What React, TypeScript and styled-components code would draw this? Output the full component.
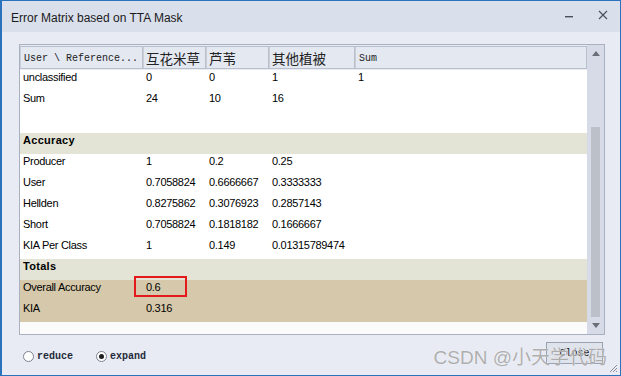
import React from "react";
import styled, { createGlobalStyle } from "styled-components";

const GlobalStyle = createGlobalStyle`
  html, body { margin: 0; padding: 0; background: #ffffff; }
  * { box-sizing: border-box; }
`;

const Window = styled.div`
  position: relative;
  width: 621px;
  height: 376px;
  border: 1px solid #2a72bb;
  border-left-width: 2px;
  background: #e8ebf3;
  display: flex;
  flex-direction: column;
  font-family: "Liberation Sans", Arial, sans-serif;
  overflow: hidden;
`;

const TitleBar = styled.div`
  height: 31px;
  flex: none;
  display: flex;
  align-items: center;
  padding: 3px 0 0 9px;
  background: #d9dfeb;
`;

const Title = styled.div`
  flex: 1;
  font-size: 12px;
  color: #1b1b1b;
`;

const TitleButton = styled.div`
  width: 34px;
  height: 28px;
  display: flex;
  align-items: center;
  justify-content: center;
  margin-top: -6px;
  color: #4a4f5a;
`;

const Frame = styled.div`
  margin: 12px 0 0 17px;
  width: 586px;
  height: 291px;
  border: 1px solid #aab1be;
  display: flex;
  background: #ffffff;
`;

const Grid = styled.div`
  flex: 1;
  display: flex;
  flex-direction: column;
  background: #fbfbfb;
  overflow: hidden;
`;

const cols = "123px 63px 63px 86px 1fr";

const HeaderRow = styled.div`
  height: 25px;
  flex: none;
  display: grid;
  grid-template-columns: ${cols};
  background: #e8ebf3;
  padding-top: 1px;
  padding-bottom: 1px;
`;

const HeaderCell = styled.div<{ $cjk?: boolean }>`
  border: 1px solid #b9bfcb;
  border-left-color: #c9ced8;
  background: #e4e8f1;
  display: flex;
  align-items: center;
  padding-left: ${(p) => (p.$cjk ? "2px" : "3px")};
  padding-top: ${(p) => (p.$cjk ? "0" : "2px")};
  white-space: nowrap;
  overflow: hidden;
  color: #222222;
  font-family: ${(p) =>
    p.$cjk
      ? '"Noto Sans CJK SC", "Liberation Sans", sans-serif'
      : '"Liberation Mono", monospace'};
  font-size: ${(p) => (p.$cjk ? "13.5px" : "10px")};
`;

const Row = styled.div<{ $tone?: "plain" | "section" | "total" }>`
  height: 21px;
  flex: none;
  display: grid;
  grid-template-columns: ${cols};
  background: ${(p) =>
    p.$tone === "section" ? "#e3e4d6" : p.$tone === "total" ? "#d6c8aa" : "#ffffff"};
`;

const Cell = styled.div<{ $bold?: boolean }>`
  padding-left: 3px;
  line-height: 14px;
  font-size: 11px;
  font-weight: ${(p) => (p.$bold ? 700 : 400)};
  letter-spacing: ${(p) => (p.$bold ? "0.3px" : "-0.3px")};
  color: #000000;
  white-space: nowrap;
`;

const Scrollbar = styled.div`
  width: 17px;
  flex: none;
  background: #d6dbe7;
  display: flex;
  flex-direction: column;
  align-items: center;
`;

const Arrow = styled.div<{ $down?: boolean }>`
  height: 17px;
  flex: none;
  display: flex;
  align-items: center;
  justify-content: center;
  &::after {
    content: "";
    border-left: 4px solid transparent;
    border-right: 4px solid transparent;
    ${(p) =>
      p.$down ? "border-top: 5px solid #6b6f78;" : "border-bottom: 5px solid #6b6f78;"}
  }
`;

const Track = styled.div`
  flex: 1;
  width: 100%;
  display: flex;
  flex-direction: column;
  align-items: center;
`;

const Thumb = styled.div`
  width: 9px;
  margin-top: 65px;
  height: 190px;
  background: #bcc0c9;
`;

const Footer = styled.div`
  flex: 1;
  display: flex;
  align-items: flex-start;
  padding: 7px 17px 0 21px;
`;

const RadioGroup = styled.div`
  flex: 1;
  display: flex;
  gap: 23px;
  margin-top: 9px;
`;

const RadioOption = styled.label`
  display: flex;
  align-items: center;
  gap: 3px;
  font-family: "Liberation Mono", monospace;
  font-size: 10px;
  font-weight: 700;
  color: #1e2a3a;
`;

const RadioDot = styled.span<{ $checked?: boolean }>`
  width: 11px;
  height: 11px;
  border-radius: 50%;
  border: 1px solid #7c818c;
  background: #ffffff;
  display: flex;
  align-items: center;
  justify-content: center;
  &::after {
    content: "";
    width: 5px;
    height: 5px;
    border-radius: 50%;
    background: ${(p) => (p.$checked ? "#1f1f1f" : "transparent")};
  }
`;

const CloseButton = styled.div`
  width: 57px;
  height: 22px;
  border: 1px solid #9aa2b1;
  background: #dfe3ec;
  display: flex;
  align-items: center;
  justify-content: center;
  font-family: "Liberation Mono", monospace;
  font-size: 10px;
  color: #111;
`;

const Highlight = styled.div`
  position: absolute;
  left: 132px;
  top: 275px;
  width: 53px;
  height: 21px;
  border: 2px solid #e3191c;
`;

const Watermark = styled.div`
  position: absolute;
  right: 13px;
  bottom: 6px;
  font-family: "Liberation Sans", "Noto Sans CJK SC", sans-serif;
  font-size: 19px;
  color: rgba(160, 160, 160, 0.85);
  text-shadow: 0 0 1px rgba(255, 255, 255, 0.9);
  white-space: nowrap;
  pointer-events: none;
`;

const Grip = styled.svg`
  position: absolute;
  right: 2px;
  bottom: 2px;
`;

type RowData = { cells: string[]; tone?: "plain" | "section" | "total"; bold?: boolean };

const rows: RowData[] = [
  { cells: ["unclassified", "0", "0", "1", "1"] },
  { cells: ["Sum", "24", "10", "16", ""] },
  { cells: ["", "", "", "", ""] },
  { cells: ["Accuracy", "", "", "", ""], tone: "section", bold: true },
  { cells: ["Producer", "1", "0.2", "0.25", ""] },
  { cells: ["User", "0.7058824", "0.6666667", "0.3333333", ""] },
  { cells: ["Hellden", "0.8275862", "0.3076923", "0.2857143", ""] },
  { cells: ["Short", "0.7058824", "0.1818182", "0.1666667", ""] },
  { cells: ["KIA Per Class", "1", "0.149", "0.01315789474", ""] },
  { cells: ["Totals", "", "", "", ""], tone: "section", bold: true },
  { cells: ["Overall Accuracy", "0.6", "", "", ""], tone: "total" },
  { cells: ["KIA", "0.316", "", "", ""], tone: "total" },
];

export default function App() {
  return (
    <>
      <GlobalStyle />
      <Window>
        <TitleBar>
          <Title>Error Matrix based on TTA Mask</Title>
          <TitleButton>
            <svg width="10" height="10" viewBox="0 0 10 10">
              <rect x="1" y="6" width="8" height="1.4" fill="#4a4f5a" />
            </svg>
          </TitleButton>
          <TitleButton>
            <svg width="10" height="10" viewBox="0 0 10 10">
              <path d="M1 1L9 9M9 1L1 9" stroke="#4a4f5a" strokeWidth="1.1" />
            </svg>
          </TitleButton>
        </TitleBar>
        <Frame>
          <Grid>
            <HeaderRow>
              <HeaderCell>User \ Reference...</HeaderCell>
              <HeaderCell $cjk>互花米草</HeaderCell>
              <HeaderCell $cjk>芦苇</HeaderCell>
              <HeaderCell $cjk>其他植被</HeaderCell>
              <HeaderCell>Sum</HeaderCell>
            </HeaderRow>
            {rows.map((r, i) => (
              <Row key={i} $tone={r.tone}>
                {r.cells.map((c, j) => (
                  <Cell key={j} $bold={r.bold}>
                    {c}
                  </Cell>
                ))}
              </Row>
            ))}
          </Grid>
          <Scrollbar>
            <Arrow />
            <Track>
              <Thumb />
            </Track>
            <Arrow $down />
          </Scrollbar>
        </Frame>
        <Footer>
          <RadioGroup>
            <RadioOption>
              <RadioDot />
              reduce
            </RadioOption>
            <RadioOption>
              <RadioDot $checked />
              expand
            </RadioOption>
          </RadioGroup>
          <CloseButton>Close</CloseButton>
        </Footer>
        <Highlight />
        <Watermark>CSDN @小天学代码</Watermark>
        <Grip width="11" height="11" viewBox="0 0 11 11">
          <path d="M10 3L3 10M10 6L6 10M10 9L9 10" stroke="#8a8f99" strokeWidth="1" />
        </Grip>
      </Window>
    </>
  );
}
